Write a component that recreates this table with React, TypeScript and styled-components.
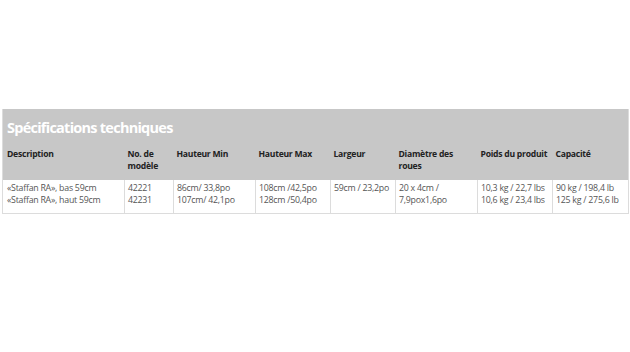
import React from "react";
import styled, { createGlobalStyle } from "styled-components";

const Global = createGlobalStyle`
  html, body { margin: 0; padding: 0; background: #ffffff; }
  body { width: 630px; height: 352px; overflow: hidden; font-family: "Open Sans", "Liberation Sans", sans-serif; }
`;

const Page = styled.div`
  padding: 109px 2px 0 2px;
`;

const Table = styled.table`
  width: 626px;
  border-collapse: collapse;
  table-layout: fixed;
  border-left: 1px solid #dcdcdc;
  border-right: 1px solid #dcdcdc;
  border-bottom: 1px solid #dcdcdc;
`;

const TitleCell = styled.th`
  background: #c7c7c7;
  color: #ffffff;
  font-family: "Open Sans", sans-serif;
  font-weight: 700;
  font-size: 14.5px;
  letter-spacing: -0.75px;
  text-align: left;
  padding: 9px 3px 0 4px;
  height: 27px;
  vertical-align: top;
`;

const HeadCell = styled.th`
  background: #c7c7c7;
  color: #222222;
  font-family: "Open Sans", sans-serif;
  font-weight: 700;
  font-size: 8.6px;
  line-height: 12px;
  letter-spacing: -0.25px;
  text-align: left;
  vertical-align: top;
  padding: 3px 2px 8px 3px;
  height: 23px;
  &:first-child { padding-left: 4px; }
`;

const Cell = styled.td`
  color: #555555;
  font-family: "Open Sans", sans-serif;
  font-size: 8.8px;
  line-height: 12px;
  letter-spacing: -0.25px;
  vertical-align: top;
  padding: 2px 2px 7px 3px;
  border-left: 1px solid #dcdcdc;
  white-space: nowrap;
  &:first-child { border-left: none; padding-left: 4px; }
`;

const widths = [122, 49, 82, 75, 65, 82, 75, 76];

const headers = [
  "Description",
  "No. de modèle",
  "Hauteur Min",
  "Hauteur Max",
  "Largeur",
  "Diamètre des roues",
  "Poids du produit",
  "Capacité",
];

const rows: string[][] = [
  ["«Staffan RA», bas 59cm", "«Staffan RA», haut 59cm"],
  ["42221", "42231"],
  ["86cm/ 33,8po", "107cm/ 42,1po"],
  ["108cm /42,5po", "128cm /50,4po"],
  ["59cm / 23,2po"],
  ["20 x 4cm /", "7,9pox1,6po"],
  ["10,3 kg / 22,7 lbs", "10,6 kg / 23,4 lbs"],
  ["90 kg / 198,4 lb", "125 kg / 275,6 lb"],
];

export default function App() {
  return (
    <>
      <Global />
      <Page>
        <Table>
          <colgroup>
            {widths.map((w, i) => (
              <col key={i} style={{ width: w }} />
            ))}
          </colgroup>
          <thead>
            <tr>
              <TitleCell colSpan={8}>Spécifications techniques</TitleCell>
            </tr>
            <tr>
              {headers.map((h) => (
                <HeadCell key={h}>{h}</HeadCell>
              ))}
            </tr>
          </thead>
          <tbody>
            <tr>
              {rows.map((lines, i) => (
                <Cell key={i}>
                  {lines.map((l, j) => (
                    <div key={j}>{l}</div>
                  ))}
                </Cell>
              ))}
            </tr>
          </tbody>
        </Table>
      </Page>
    </>
  );
}
